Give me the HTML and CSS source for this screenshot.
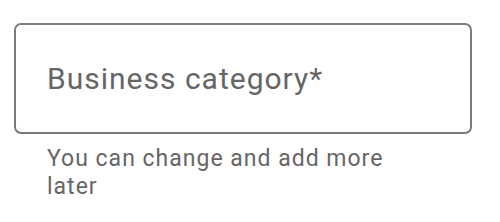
FILE: index.html
```html
<!DOCTYPE html>
<html lang="en">
  <head>
    <meta charset="UTF-8" />
    <meta name="viewport" content="width=device-width, initial-scale=1.0" />
    <title>Business category</title>
    <link rel="stylesheet" href="styles.css">
  </head>
  <body>
    <div class="field">
      <div class="field-box">
        <span class="field-label">Business category*</span>
      </div>
      <p class="field-hint">You can change and add more<br>later</p>
    </div>
  </body>
</html>
```

FILE: styles.css
```css
body {
  margin: 0;
  font-family: Roboto, "Liberation Sans", sans-serif;
  background: #fff;
}

.field {
  padding: 23px 28px 0 14px;
}

.field-box {
  height: 107px;
  border: 2px solid #7a7a7a;
  border-radius: 7px;
  display: flex;
  align-items: center;
  padding-left: 31px;
}

.field-label {
  font-size: 30px;
  letter-spacing: 1px;
  color: #666;
}

.field-hint {
  margin: 11px 0 0 33px;
  font-size: 23px;
  line-height: 28px;
  color: #666;
  letter-spacing: 1px;
}
```
